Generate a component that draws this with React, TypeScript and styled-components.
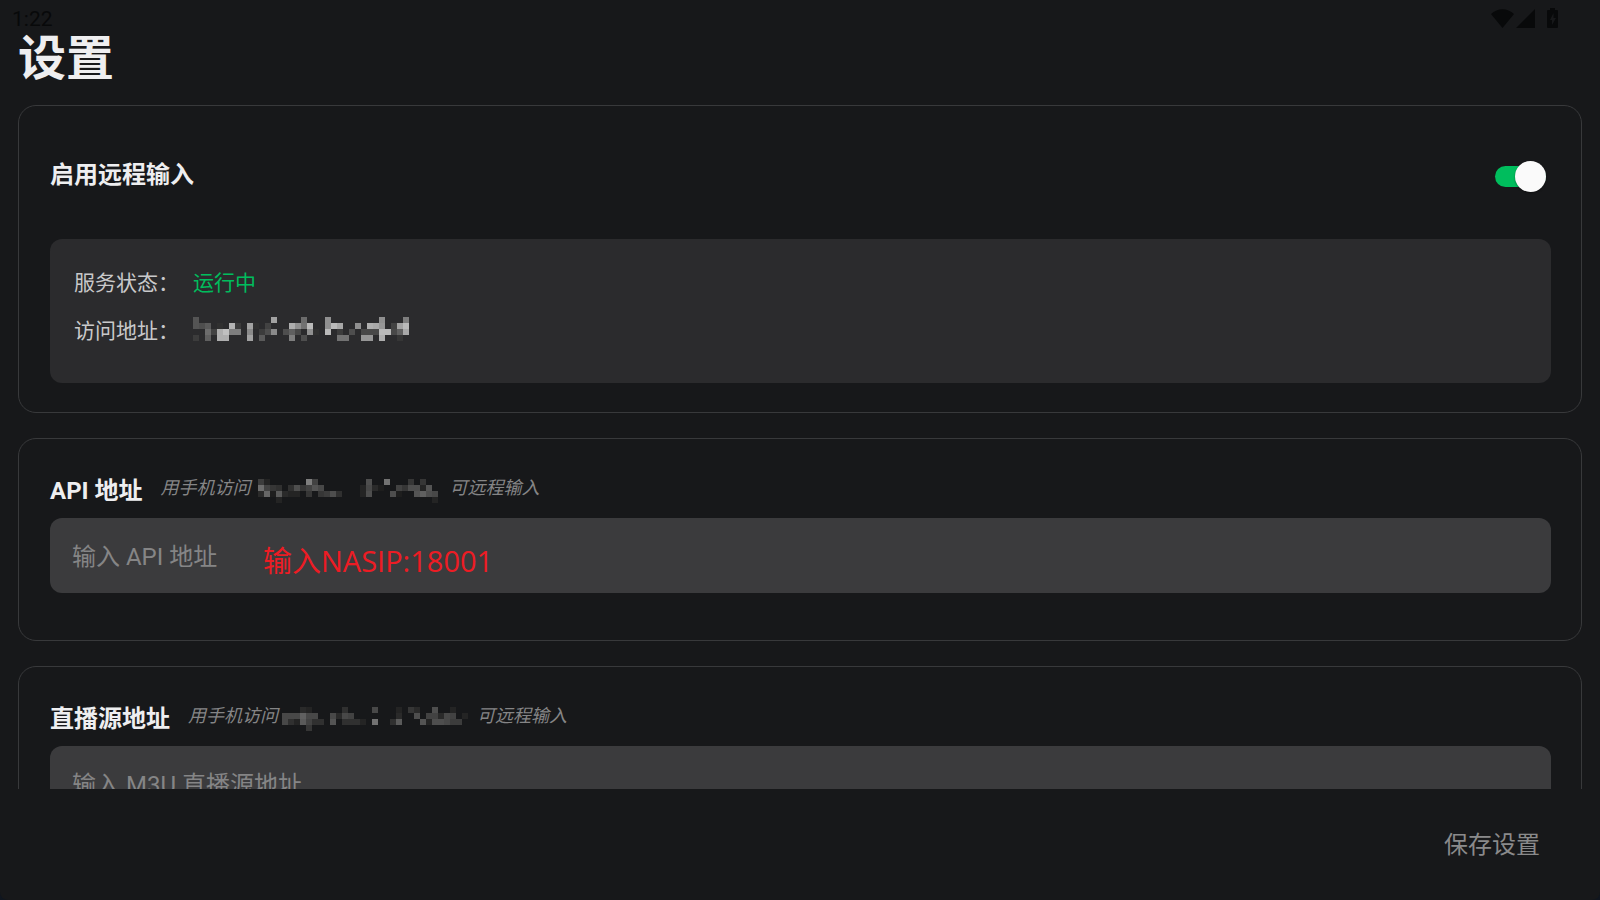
import React, { useState } from "react";
import styled, { createGlobalStyle } from "styled-components";

const GlobalStyle = createGlobalStyle`
  * { box-sizing: border-box; }
  body { margin: 0; background: #10161f; }
  body, button, input { font-family: Roboto, "Noto Sans CJK SC", sans-serif; }
`;

const Screen = styled.div`
  position: relative;
  display: flex;
  flex-direction: column;
  height: 100vh;
  background: #17181a;
  border-radius: 0 0 8px 8px;
  overflow: hidden;
  color: #eeeef0;
`;

const StatusBar = styled.div`
  position: absolute;
  inset: 0 0 auto 0;
  display: flex;
  align-items: center;
  justify-content: space-between;
  height: 37px;
  padding: 0 40px 0 12px;
  color: #08090a;
  font-size: 21px;
`;

const Title = styled.h1`
  margin: 0;
  padding: 23px 18px 0;
  font-size: 48px;
  line-height: 72px;
  font-weight: 700;
`;

const Content = styled.main`
  flex: 1;
  min-height: 0;
  display: flex;
  flex-direction: column;
  gap: 25px;
  margin-top: 10px;
  padding: 0 18px;
  overflow-y: auto;
  scrollbar-width: none;
`;

const Card = styled.section`
  flex: none;
  padding: 31px 30px 29px 31px;
  border: 1px solid #38393b;
  border-radius: 18px;
`;

const FieldCard = styled(Card)`
  padding-bottom: 47px;
`;

const SwitchRow = styled.label`
  display: flex;
  align-items: center;
  justify-content: space-between;
  height: 70px;
  margin-bottom: 32px;
  padding-right: 5px;
  font-size: 24px;
  font-weight: 700;
`;

const Switch = styled.input`
  appearance: none;
  display: flex;
  align-items: center;
  width: 51px;
  height: 21px;
  margin: 9px 0 0;
  border-radius: 11px;
  background: #5a5a5c;
  cursor: pointer;
  &::before {
    content: "";
    width: 31px;
    height: 31px;
    flex: none;
    border-radius: 50%;
    background: #fafafa;
    box-shadow: 0 1px 2px rgba(0, 0, 0, 0.4);
  }
  &:checked { background: #00bd5d; justify-content: flex-end; }
`;

const StatusPanel = styled.dl`
  margin: 0;
  padding: 18px 24px 30px;
  border-radius: 12px;
  background: #2b2b2d;
`;

const StatusRow = styled.div`
  display: flex;
  align-items: center;
  height: 48px;
  font-size: 21px;
`;

const Term = styled.dt`
  width: 119px;
  color: #c9c9ca;
`;

const Value = styled.dd`
  display: flex;
  margin: 0;
  color: #00bd5d;
`;

const FieldHead = styled.div`
  display: flex;
  align-items: center;
  gap: 18px;
  height: 36px;
  margin-bottom: 12px;
`;

const FieldLabel = styled.label`
  font-size: 24px;
  font-weight: 700;
`;

const Hint = styled.span<{ $gap: number }>`
  display: flex;
  align-items: flex-end;
  gap: ${(p) => p.$gap}px;
  color: #858586;
  font-size: 18px;
  line-height: 30px;
  font-style: italic;
`;

const HintTail = styled.span`
  padding-left: 5px;
`;

const FieldBox = styled.div`
  position: relative;
`;

const TextInput = styled.input`
  display: block;
  width: 100%;
  height: 75px;
  padding: 2px 22px 0;
  border: 0;
  border-radius: 12px;
  outline: 0;
  background: #3b3b3d;
  color: #eeeef0;
  font-size: 24px;
  &::placeholder { color: #858586; opacity: 1; }
`;

const Annotation = styled.span`
  position: absolute;
  left: 213px;
  top: 24px;
  color: #ed1c24;
  font-family: "Open Sans", "Noto Sans CJK SC", sans-serif;
  font-size: 29px;
  line-height: 38px;
  pointer-events: none;
`;

const Footer = styled.footer`
  flex: none;
  display: flex;
  align-items: center;
  justify-content: flex-end;
  height: 111px;
  padding: 0 36px;
`;

const SaveButton = styled.button`
  padding: 0 24px;
  border: 0;
  background: none;
  color: #8a8a8b;
  font-size: 24px;
  line-height: 48px;
  cursor: pointer;
`;

const CELL = 6;

/* Pixelated address: each character is the grey level of one cell, in base 36. */
const MaskedAddress = ({ rows }: { rows: string[] }) => (
  <svg
    width={rows[0].length * CELL}
    height={rows.length * CELL}
    shapeRendering="crispEdges"
    aria-hidden="true"
  >
    {rows.flatMap((row, y) =>
      [...row].map((c, x) => {
        if (c === ".") return null;
        const v = parseInt(c, 36) * 6;
        return (
          <rect key={`${x}-${y}`} x={x * CELL} y={y * CELL} width={CELL} height={CELL} fill={`rgb(${v},${v},${v})`} />
        );
      })
    )}
  </svg>
);

const ACCESS_MASK = [
  "e............r....i...o........o...l",
  "edf.8.ua.r8.b...tojv..ovs..o.tsp.brv",
  "..ibtwll.n.adn.dgc.o8.v.a.d.cccvvcgs",
  "a.g.tt...r.f....l.d.....jj..pp.t..9.",
];

const API_MASK = [
  "a6......lb........d..j...9.9..",
  "ib98.8d9bec......6c75..b9dd6e.",
  "7h5f766.9.9ad8...6d...d5..egdc",
  "...6.........................6",
];

const LIVE_MASK = [
  "...76.....8....c...6.97..d..6..",
  "cccgcc..c7cb.......7..d.bb7cb.6",
  "c86fb88.e.8886.j..8f...e6ddcaa.",
  "....9..........................",
];

const StatusIcons = () => (
  <svg width="70" height="22" viewBox="0 0 70 22" fill="#08090a" aria-hidden="true">
    <path d="M1 6C7.500-.4 17.500-.4 24 6L12.500 20Z" />
    <path d="M45 1V20H26Z" />
    <path
      fillRule="evenodd"
      d="M60 0h5v2h2q1 0 1 1v16q0 1-1 1h-9q-1 0-1-1V3q0-1 1-1h2ZM63.500 5L60 12h2v5l4-7h-2.500Z"
    />
  </svg>
);

export default function App() {
  const [remote, setRemote] = useState(true);
  const [api, setApi] = useState("");
  const [live, setLive] = useState("");

  return (
    <>
      <GlobalStyle />
      <Screen>
        <StatusBar>
          <span>1:22</span>
          <StatusIcons />
        </StatusBar>
        <Title>设置</Title>
        <Content>
          <Card>
            <SwitchRow>
              启用远程输入
              <Switch
                type="checkbox"
                role="switch"
                checked={remote}
                onChange={(e) => setRemote(e.target.checked)}
              />
            </SwitchRow>
            <StatusPanel>
              <StatusRow>
                <Term>服务状态：</Term>
                <Value>运行中</Value>
              </StatusRow>
              <StatusRow>
                <Term>访问地址：</Term>
                <Value>
                  <MaskedAddress rows={ACCESS_MASK} />
                </Value>
              </StatusRow>
            </StatusPanel>
          </Card>

          <FieldCard>
            <FieldHead>
              <FieldLabel htmlFor="api">API 地址</FieldLabel>
              <Hint $gap={7}>
                用手机访问
                <MaskedAddress rows={API_MASK} />
                <HintTail>可远程输入</HintTail>
              </Hint>
            </FieldHead>
            <FieldBox>
              <TextInput id="api" placeholder="输入 API 地址" value={api} onChange={(e) => setApi(e.target.value)} />
              <Annotation>输入NASIP:18001</Annotation>
            </FieldBox>
          </FieldCard>

          <FieldCard>
            <FieldHead>
              <FieldLabel htmlFor="live">直播源地址</FieldLabel>
              <Hint $gap={4}>
                用手机访问
                <MaskedAddress rows={LIVE_MASK} />
                <HintTail>可远程输入</HintTail>
              </Hint>
            </FieldHead>
            <FieldBox>
              <TextInput
                id="live"
                placeholder="输入 M3U 直播源地址"
                value={live}
                onChange={(e) => setLive(e.target.value)}
              />
            </FieldBox>
          </FieldCard>
        </Content>
        <Footer>
          <SaveButton type="button">保存设置</SaveButton>
        </Footer>
      </Screen>
    </>
  );
}
